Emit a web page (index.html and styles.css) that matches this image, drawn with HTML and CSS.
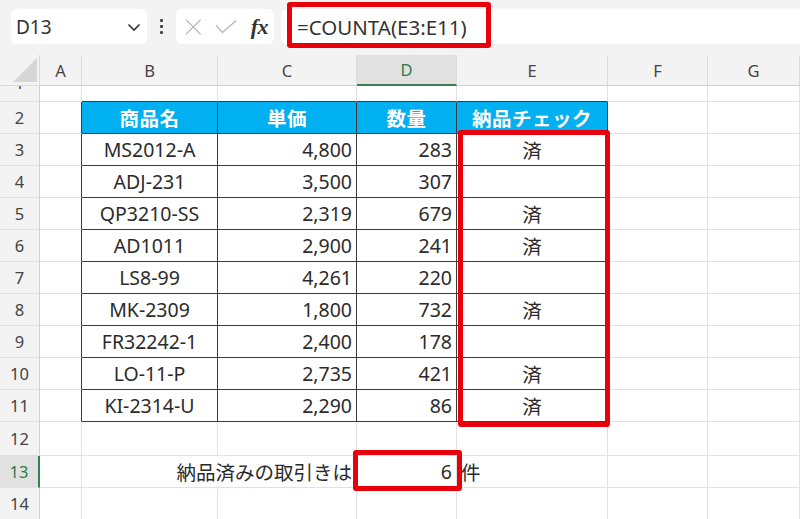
FILE: index.html
```html
<!DOCTYPE html>
<html lang="ja">
<head>
<meta charset="utf-8">
<title>Excel COUNTA</title>
<link rel="stylesheet" href="styles.css">
</head>
<body>
<div class="app">
  <div class="toolbar">
    <div class="namebox">
      <span class="name">D13</span>
      <svg class="chev" width="14" height="9" viewBox="0 0 14 9"><path d="M1.5 1.5 L7 7 L12.5 1.5" fill="none" stroke="#333" stroke-width="1.6"/></svg>
    </div>
    <div class="dots"><i></i><i></i><i></i></div>
    <div class="fbtns">
      <svg width="18" height="18" viewBox="0 0 18 18"><path d="M1 1 L17 17 M17 1 L1 17" stroke="#b8b8b8" stroke-width="1.5" fill="none"/></svg>
      <svg width="24" height="16" viewBox="0 0 24 16"><path d="M1 6 L8 14 L23 1" stroke="#b8b8b8" stroke-width="1.5" fill="none"/></svg>
      <span class="fx">fx</span>
    </div>
    <div class="formula"><span class="ftext">=COUNTA(E3:E11)</span></div>
    <div class="redbox rb-formula"></div>
  </div>

  <div class="sheet">
    <!-- column headers -->
    <div class="corner"><svg width="40" height="31" viewBox="0 0 40 31"><path d="M37 3 L37 27 L13 27 Z" fill="#d6d6d6"/></svg></div>
    <div class="ch">A</div>
    <div class="ch">B</div>
    <div class="ch">C</div>
    <div class="ch sel">D</div>
    <div class="ch">E</div>
    <div class="ch">F</div>
    <div class="ch">G</div>

    <!-- row 1 -->
    <div class="rh r1"><span>1</span></div>
    <div class="c"></div>
    <div class="c tt"></div><div class="c tt"></div><div class="c tt"></div><div class="c tt"></div>
    <div class="c"></div><div class="c"></div>

    <!-- row 2 -->
    <div class="rh">2</div>
    <div class="c tl"></div>
    <div class="c t th">商品名</div><div class="c t th">単価</div><div class="c t th">数量</div><div class="c t th">納品チェック</div>
    <div class="c"></div><div class="c"></div>

    <div class="rh">3</div><div class="c tl"></div>
    <div class="c t ctr">MS2012-A</div><div class="c t rt">4,800</div><div class="c t rt">283</div><div class="c t ctr">済</div>
    <div class="c"></div><div class="c"></div>

    <div class="rh">4</div><div class="c tl"></div>
    <div class="c t ctr">ADJ-231</div><div class="c t rt">3,500</div><div class="c t rt">307</div><div class="c t ctr"></div>
    <div class="c"></div><div class="c"></div>

    <div class="rh">5</div><div class="c tl"></div>
    <div class="c t ctr">QP3210-SS</div><div class="c t rt">2,319</div><div class="c t rt">679</div><div class="c t ctr">済</div>
    <div class="c"></div><div class="c"></div>

    <div class="rh">6</div><div class="c tl"></div>
    <div class="c t ctr">AD1011</div><div class="c t rt">2,900</div><div class="c t rt">241</div><div class="c t ctr">済</div>
    <div class="c"></div><div class="c"></div>

    <div class="rh">7</div><div class="c tl"></div>
    <div class="c t ctr">LS8-99</div><div class="c t rt">4,261</div><div class="c t rt">220</div><div class="c t ctr"></div>
    <div class="c"></div><div class="c"></div>

    <div class="rh">8</div><div class="c tl"></div>
    <div class="c t ctr">MK-2309</div><div class="c t rt">1,800</div><div class="c t rt">732</div><div class="c t ctr">済</div>
    <div class="c"></div><div class="c"></div>

    <div class="rh">9</div><div class="c tl"></div>
    <div class="c t ctr">FR32242-1</div><div class="c t rt">2,400</div><div class="c t rt">178</div><div class="c t ctr"></div>
    <div class="c"></div><div class="c"></div>

    <div class="rh">10</div><div class="c tl"></div>
    <div class="c t ctr">LO-11-P</div><div class="c t rt">2,735</div><div class="c t rt">421</div><div class="c t ctr">済</div>
    <div class="c"></div><div class="c"></div>

    <div class="rh">11</div><div class="c tl"></div>
    <div class="c t ctr">KI-2314-U</div><div class="c t rt">2,290</div><div class="c t rt">86</div><div class="c t ctr">済</div>
    <div class="c"></div><div class="c"></div>

    <div class="rh">12</div>
    <div class="c"></div><div class="c"></div><div class="c"></div><div class="c"></div><div class="c"></div><div class="c"></div><div class="c"></div>

    <div class="rh rsel">13</div>
    <div class="c"></div>
    <div class="c rt span2">納品済みの取引きは</div>
    <div class="c rt">6</div>
    <div class="c lt">件</div>
    <div class="c"></div><div class="c"></div>

    <div class="rh">14</div>
    <div class="c"></div><div class="c"></div><div class="c"></div><div class="c"></div><div class="c"></div><div class="c"></div><div class="c"></div>

    <div class="redbox rb-range"></div>
    <div class="redbox rb-cell"></div>
  </div>
</div>
</body>
</html>
```

FILE: styles.css
```css
* { box-sizing: border-box; }
html, body { margin: 0; padding: 0; }
body {
  width: 800px;
  height: 519px;
  overflow: hidden;
  background: #ffffff;
  font-family: "Noto Sans", "Noto Sans CJK JP", sans-serif;
  color: #262626;
}
.app { width: 800px; height: 519px; overflow: hidden; }

.toolbar {
  position: relative;
  height: 55px;
  background: #f3f3f3;
  display: flex;
  align-items: flex-start;
  padding-top: 9px;
}
.namebox {
  margin-left: 11px;
  width: 136px;
  height: 35px;
  background: #fff;
  border-radius: 6px;
  display: flex;
  align-items: center;
  justify-content: space-between;
  padding: 0 6px 0 5px;
}
.name { font-size: 19px; color: #333; }
.chev { margin-top: 1px; }
.dots {
  width: 29px;
  height: 35px;
  display: flex;
  flex-direction: column;
  align-items: center;
  justify-content: center;
  gap: 3px;
}
.dots i { display: block; width: 3px; height: 3px; background: #444; border-radius: 1px; }
.fbtns {
  width: 98px;
  height: 35px;
  background: #fff;
  border-radius: 6px;
  display: flex;
  align-items: center;
  padding: 0 6px 0 9px;
  gap: 13px;
}
.fx {
  font-family: "Liberation Serif", "DejaVu Serif", serif;
  font-style: italic;
  font-weight: bold;
  font-size: 22px;
  color: #333;
  margin-left: 1px;
  letter-spacing: -0.5px;
}
.formula {
  margin-left: 7px;
  flex: 1;
  height: 35px;
  background: #fff;
  border-radius: 6px 0 0 6px;
  display: flex;
  align-items: center;
  padding-left: 16px;
}
.ftext { font-size: 20.5px; color: #333; }

.redbox {
  position: absolute;
  border: 5px solid #e8000b;
  border-radius: 3px;
  pointer-events: none;
}
.rb-formula { left: 287px; top: 2px; width: 204px; height: 46px; }
.rb-range { left: 458px; top: 75px; width: 152px; height: 297px; }
.rb-cell { left: 353px; top: 395px; width: 109px; height: 41px; }

.sheet {
  position: relative;
  display: grid;
  grid-template-columns: 40px 42px 136px 139px 100px 151px 100px 1fr;
  grid-template-rows: 31px 16px repeat(10, 32px) 34px 32px 32px;
  background: #fff;
}
.corner {
  background: #f3f3f3;
  border-right: 1px solid #dadada;
  border-bottom: 1px solid #dadada;
}
.corner svg { display: block; }
.ch {
  background: #f3f3f3;
  border-right: 1px solid #dcdcdc;
  border-bottom: 1px solid #d0d0d0;
  display: flex;
  align-items: center;
  justify-content: center;
  font-size: 16.5px;
  color: #444;
}
.ch.sel {
  background: #e1e1e1;
  color: #2f7a4a;
  border-bottom: 2px solid #3f7d55;
}
.rh {
  background: #f3f3f3;
  border-right: 1px solid #d0d0d0;
  border-bottom: 1px solid #e0e0e0;
  display: flex;
  align-items: center;
  justify-content: center;
  font-size: 16.5px;
  color: #444;
  overflow: hidden;
}
.rh.r1 { align-items: flex-start; }
.rh.r1 span { display: block; line-height: 16px; margin-top: -11px; }
.rh.rsel {
  background: #e1e1e1;
  color: #2f7a4a;
  border-right: 2px solid #3f7d55;
}

.c {
  border-right: 1px solid #e2e2e2;
  border-bottom: 1px solid #e2e2e2;
  display: flex;
  align-items: center;
  font-size: 19.5px;
  color: #2b2b2b;
  white-space: nowrap;
  padding: 0 4px;
}
.c.t { border-right-color: #3c3c3c; border-bottom-color: #3c3c3c; }
.c.tt { border-bottom-color: #3c3c3c; }
.c.tl { border-right-color: #3c3c3c; }
.c.th {
  background: #00b0f0;
  color: #fff;
  font-weight: bold;
  justify-content: center;
  letter-spacing: 0.5px;
}
.ctr { justify-content: center; }
.rt { justify-content: flex-end; }
.lt { justify-content: flex-start; }
.span2 { grid-column: span 2; }
```
